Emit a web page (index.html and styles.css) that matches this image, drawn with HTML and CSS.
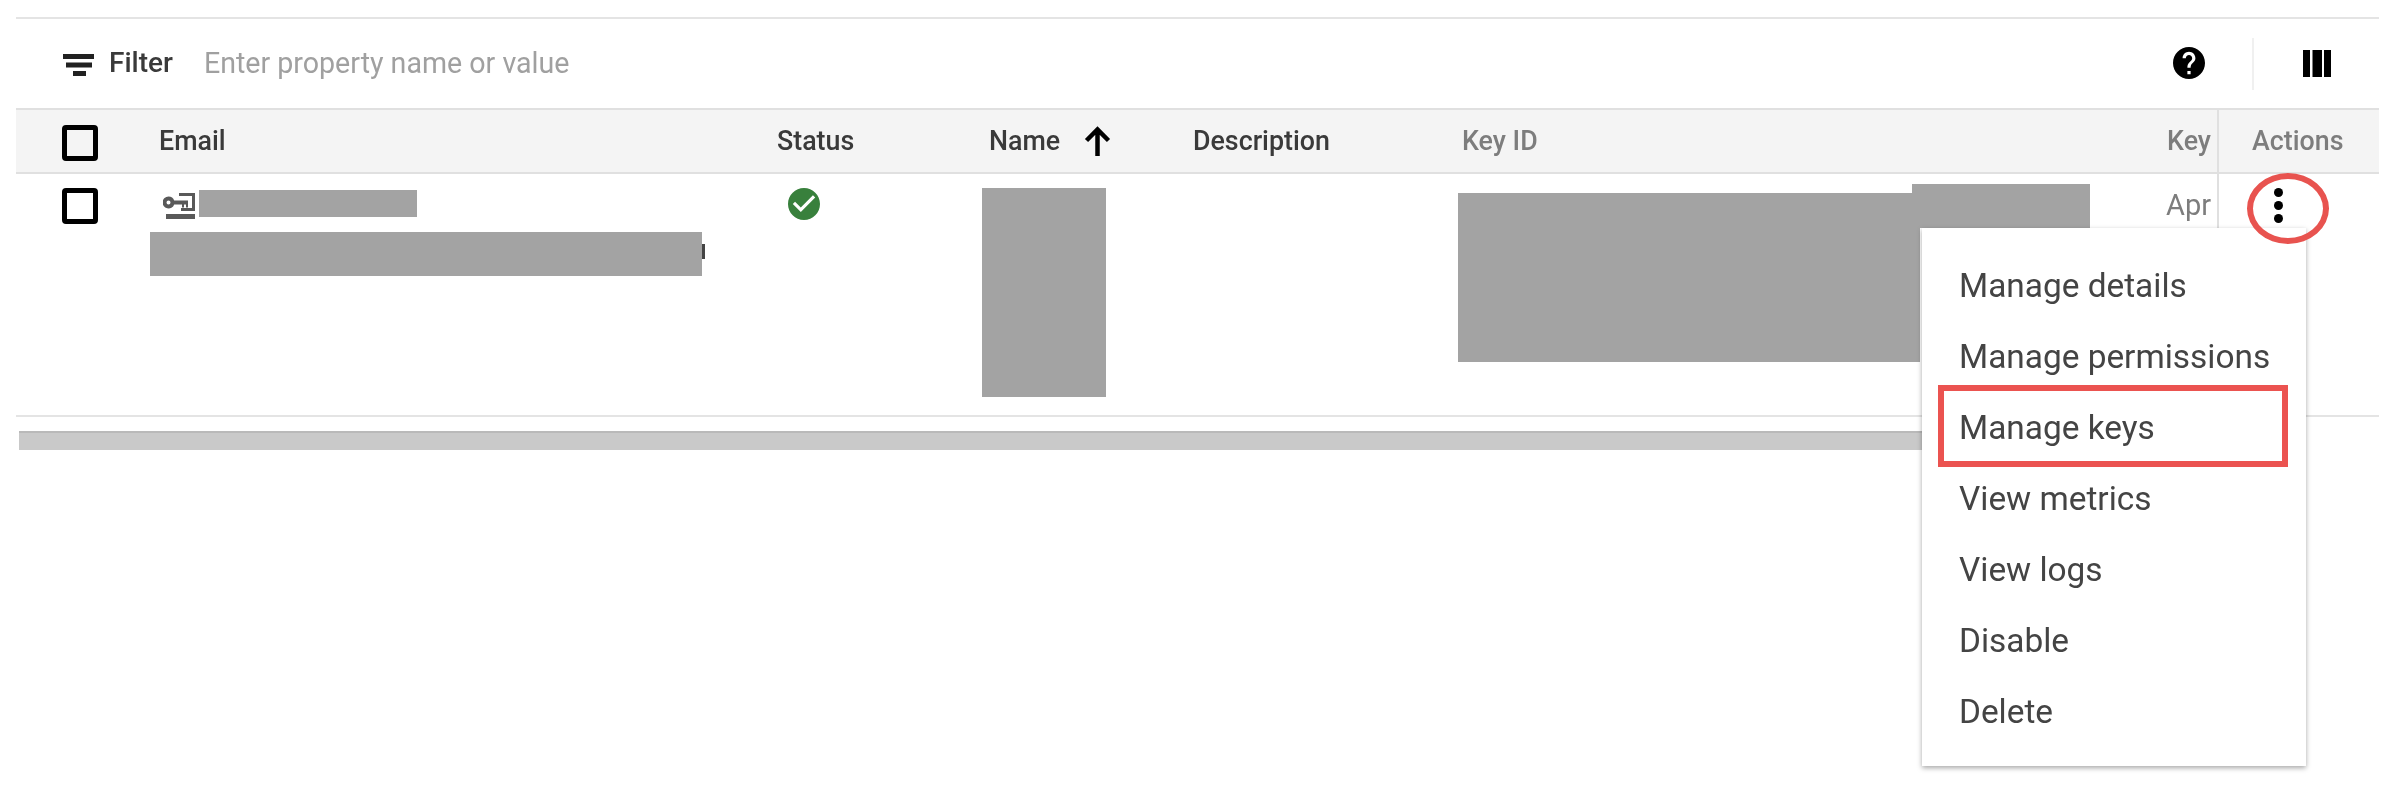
FILE: index.html
```html
<!DOCTYPE html>
<html lang="en">
<head>
<meta charset="utf-8">
<title>Service accounts</title>
<link rel="stylesheet" href="styles.css">
</head>
<body>
<main class="panel">
  <div class="toolbar">
    <svg class="ico-filter" viewBox="0 0 31 22"><path d="M0 0h31v5H0zM3 8.500h26v5H3zM10 17h13v5H10z"/></svg>
    <span class="filter-label">Filter</span>
    <span class="filter-hint">Enter property name or value</span>
    <svg class="ico-help" viewBox="2 2 20 20"><path d="M12 2C6.48 2 2 6.48 2 12s4.48 10 10 10 10-4.48 10-10S17.52 2 12 2zm1 17h-2v-2h2v2zm2.07-7.75l-.9.92C13.45 12.9 13 13.5 13 15h-2v-.5c0-1.1.45-2.1 1.17-2.83l1.24-1.26c.37-.36.59-.86.59-1.41 0-1.1-.9-2-2-2s-2 .9-2 2H8c0-2.21 1.79-4 4-4s4 1.79 4 4c0 .88-.36 1.68-.93 2.25z"/></svg>
    <span class="tool-sep"></span>
    <svg class="ico-cols" viewBox="0 0 28 27"><path d="M0 0h7v27H0zM9.500 0h9.500v27H9.500zM21 0h7v27h-7z"/></svg>
  </div>

  <div class="table">
    <div class="row head">
      <div class="cell c-check"><span class="checkbox"></span></div>
      <div class="cell c-email">Email</div>
      <div class="cell c-status">Status</div>
      <div class="cell c-name">Name
        <svg class="ico-arrow" viewBox="0 0 27 30"><path d="M13.500 30V4M2.500 14.500L13.500 3.500l11 11"/></svg>
      </div>
      <div class="cell c-desc">Description</div>
      <div class="cell c-keyid muted">Key ID</div>
      <div class="cell c-key muted">Key</div>
      <div class="cell c-actions muted">Actions</div>
    </div>
    <div class="row body">
      <div class="cell c-check"><span class="checkbox"></span></div>
      <div class="cell c-email">
        <svg class="ico-key" viewBox="0 0 32 27"><path fill-rule="evenodd" d="M16 0h16v18H18v-3h11V3H16zM5.500 3.500a6 6 0 0 1 5.700 4H25v7h-2v-3h-2v3h-2v-3h-7.800a6 6 0 1 1-5.700-8zm0 4a2 2 0 1 0 0 4 2 2 0 0 0 0-4zM3 21h29v5H3z"/></svg>
        <span class="redact r-email1"></span>
        <span class="sliver"></span>
        <span class="redact r-email2"></span>
      </div>
      <div class="cell c-status"><svg class="ico-ok" viewBox="2 2 20 20"><path d="M12 2C6.480 2 2 6.480 2 12s4.480 10 10 10 10-4.480 10-10S17.520 2 12 2zm-2 15l-5-5 1.410-1.410L10 14.170l7.590-7.590L19 8l-9 9z"/></svg></div>
      <div class="cell c-name"><span class="redact r-name"></span></div>
      <div class="cell c-desc"></div>
      <div class="cell c-keyid"><span class="redact r-key1"></span><span class="redact r-key2"></span></div>
      <div class="cell c-key muted">Apr</div>
      <div class="cell c-actions">
        <span class="kebab"><i></i><i></i><i></i></span>
        <span class="ring"></span>
      </div>
    </div>
  </div>
  <div class="scrollbar"></div>

  <ul class="menu">
    <li>Manage details</li>
    <li>Manage permissions</li>
    <li class="marked">Manage keys</li>
    <li>View metrics</li>
    <li>View logs</li>
    <li>Disable</li>
    <li>Delete</li>
  </ul>
</main>
</body>
</html>
```

FILE: styles.css
```css
*, *::after { box-sizing: border-box; }
html, body { margin: 0; background: #fff; }
body { height: 790px; overflow: hidden; font-family: Roboto, "Liberation Sans", sans-serif; color: #212121; }

.panel { position: relative; width: 2400px; height: 790px; padding: 17px 21px 0 16px; filter: blur(0.6px); }

.toolbar { display: flex; align-items: center; height: 91px; border-top: 2px solid #e4e4e4; padding-left: 47px; }
.ico-filter { width: 31px; height: 22px; margin-top: 2px; fill: #212121; }
.filter-label { margin-left: 15px; margin-bottom: 2px; font-size: 28px; font-weight: 500; color: #3a3a3a; }
.filter-hint { margin-left: 31px; margin-bottom: 2px; font-size: 28.600px; color: #a0a0a0; }
.ico-help { width: 32px; height: 32px; margin-left: auto; margin-bottom: 2px; fill: #000; }
.tool-sep { width: 2px; height: 52px; margin-left: 47px; background: #f0f0f0; }
.ico-cols { width: 28px; height: 27px; margin-left: 49px; margin-right: 48px; fill: #000; }

.table { border-top: 2px solid #e0e0e0; }
.row { display: grid; grid-template-columns: 144px 617px 212px 204px 269px 660px 95px 162px; font-size: 26.800px; }
.head { height: 64px; background: #f4f4f4; border-bottom: 2px solid #e0e0e0; align-items: center; font-weight: 500; color: #3a3a3a; }
.body { height: 243px; border-bottom: 2px solid #e4e4e4; }
.cell { position: relative; min-width: 0; }
.muted { color: #7d7d7d; font-weight: 400; }
.head .muted { font-weight: 500; }
.c-check { padding-left: 46px; }
.body .c-check { padding-top: 14px; }
.head .c-check { padding-top: 4px; }
.head .c-email { text-indent: -1px; }
.checkbox { display: block; width: 36px; height: 36px; border: 5px solid #000; border-radius: 4px; }
.c-name { display: flex; align-items: center; gap: 24px; }
.body .c-name { align-items: flex-start; }
.ico-arrow { width: 27px; height: 30px; fill: none; stroke: #000; stroke-width: 4.500px; }
.c-key { text-align: right; padding-right: 6px; white-space: nowrap; }
.head .c-actions, .head .c-key { height: 100%; display: flex; align-items: center; }
.head .c-key { justify-content: flex-end; }
.c-actions { border-left: 2px solid #e0e0e0; padding-left: 33px; }
.body .c-key { padding-top: 14px; font-size: 29px; }

.ico-key { display: block; width: 32px; height: 27px; margin: 19px 0 0 3px; fill: #595959; }
.ico-ok { display: block; width: 32px; height: 32px; margin: 14px 0 0 11px; fill: #38803c; }

.redact { position: absolute; display: block; background: #a3a3a3; }
.r-email1 { left: 39px; top: 16px; width: 218px; height: 27px; }
.r-email2 { left: -10px; top: 58px; width: 552px; height: 44px; }
.sliver { position: absolute; left: 540px; top: 70px; width: 5px; height: 15px; background: #444; }
.r-name { left: -7px; top: 14px; width: 124px; height: 209px; }
.r-key1 { left: -4px; top: 19px; width: 462px; height: 169px; }
.r-key2 { left: 450px; top: 10px; width: 178px; height: 44px; }

.kebab { position: absolute; left: 55px; top: 14px; display: flex; flex-direction: column; gap: 4px; }
.kebab i { display: block; width: 9px; height: 9px; border-radius: 50%; background: #000; }
.ring { position: absolute; z-index: 2; left: 28px; top: -1px; width: 82px; height: 71px; border: 6px solid #e8534f; border-radius: 50%; }

.scrollbar { width: 1915px; height: 19px; margin: 14px 0 0 3px; background: #c9c9c9; border-top: 2px solid #b9b9b9; }

.menu { position: absolute; z-index: 1; left: 1922px; top: 228px; width: 384px; height: 538px; margin: 0; padding: 22px 0 0; list-style: none; background: #fff; box-shadow: 0 2px 5px rgba(0,0,0,.35); font-size: 33.400px; color: #444; }
.menu li { position: relative; height: 71px; line-height: 71px; padding-left: 37px; white-space: nowrap; }
.marked::after { content: ""; position: absolute; left: 16px; top: -7px; width: 350px; height: 82px; border: 6px solid #eb5350; }
```
